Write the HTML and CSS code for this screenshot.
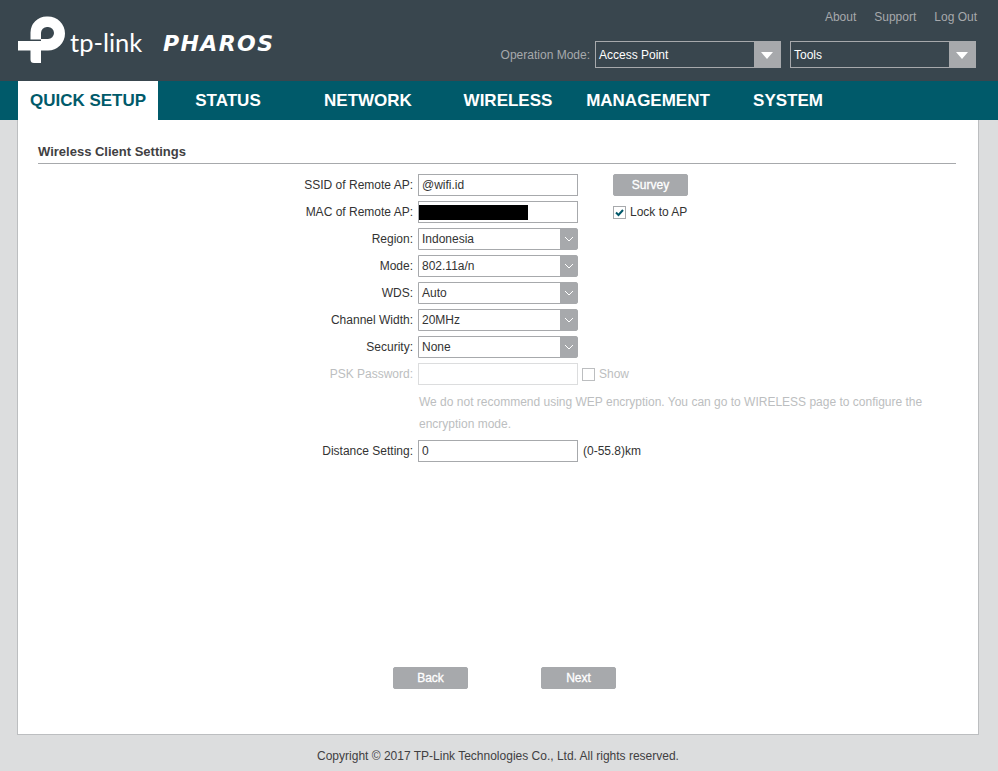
FILE: index.html
```html
<!DOCTYPE html>
<html lang="en">
<head>
	<meta charset="UTF-8">
	<meta name="viewport" content="width=device-width, initial-scale=1.0">
	<title>Quick Setup</title>
	<link rel="stylesheet" href="styles.css">
</head>
<body>
	<header class="topbar">
		<div class="brand">
			<svg class="brand-mark" width="48" height="48" viewBox="0 0 48 48">
				<path fill="#fff" d="M12.5 23.5V16.5A16 16 0 0 1 28.5 .5H30A17 17 0 0 1 30 34.5H23V23H30A6 6 0 0 0 30 11H29A6 6 0 0 0 23 17V23.5Z"/>
				<path fill="#fff" d="M0 25H23V47H16A3.5 3.5 0 0 1 12.5 43.5V34.5H0Z"/>
			</svg>
			<span class="brand-name">tp-link</span>
			<span class="brand-product">PHAROS</span>
		</div>
		<div class="topbar-right">
			<div class="toplinks">
				<a>About</a>
				<a>Support</a>
				<a>Log Out</a>
			</div>
			<div class="topselects">
				<span class="mode-label">Operation Mode:</span>
				<div class="topselect">
					<span class="topselect-text">Access Point</span>
					<span class="topselect-arrow"></span>
				</div>
				<div class="topselect">
					<span class="topselect-text">Tools</span>
					<span class="topselect-arrow"></span>
				</div>
			</div>
		</div>
	</header>

	<nav class="mainnav">
		<a class="active">QUICK SETUP</a>
		<a>STATUS</a>
		<a>NETWORK</a>
		<a>WIRELESS</a>
		<a>MANAGEMENT</a>
		<a>SYSTEM</a>
	</nav>

	<main class="panel">
		<h2 class="section-title">Wireless Client Settings</h2>

		<div class="row">
			<label class="row-label">SSID of Remote AP:</label>
			<input class="field" type="text" value="@wifi.id">
			<button class="btn btn-survey">Survey</button>
		</div>
		<div class="row">
			<label class="row-label">MAC of Remote AP:</label>
			<div class="field field-mac"><span class="redacted"></span></div>
			<span class="check check-lock">
				<span class="box">
					<svg width="11" height="11" viewBox="0 0 11 11"><path d="M2 5.5L4.5 8L9 3" fill="none" stroke="#00586a" stroke-width="2"/></svg>
				</span>
				Lock to AP
			</span>
		</div>
		<div class="row">
			<label class="row-label">Region:</label>
			<div class="combo"><span class="combo-text">Indonesia</span><span class="combo-arrow"><svg width="10" height="6" viewBox="0 0 10 6"><path d="M1 1L5 5L9 1" fill="none" stroke="#fff" stroke-width="1"/></svg></span></div>
		</div>
		<div class="row">
			<label class="row-label">Mode:</label>
			<div class="combo"><span class="combo-text">802.11a/n</span><span class="combo-arrow"><svg width="10" height="6" viewBox="0 0 10 6"><path d="M1 1L5 5L9 1" fill="none" stroke="#fff" stroke-width="1"/></svg></span></div>
		</div>
		<div class="row">
			<label class="row-label">WDS:</label>
			<div class="combo"><span class="combo-text">Auto</span><span class="combo-arrow"><svg width="10" height="6" viewBox="0 0 10 6"><path d="M1 1L5 5L9 1" fill="none" stroke="#fff" stroke-width="1"/></svg></span></div>
		</div>
		<div class="row">
			<label class="row-label">Channel Width:</label>
			<div class="combo"><span class="combo-text">20MHz</span><span class="combo-arrow"><svg width="10" height="6" viewBox="0 0 10 6"><path d="M1 1L5 5L9 1" fill="none" stroke="#fff" stroke-width="1"/></svg></span></div>
		</div>
		<div class="row">
			<label class="row-label">Security:</label>
			<div class="combo"><span class="combo-text">None</span><span class="combo-arrow"><svg width="10" height="6" viewBox="0 0 10 6"><path d="M1 1L5 5L9 1" fill="none" stroke="#fff" stroke-width="1"/></svg></span></div>
		</div>
		<div class="row disabled">
			<label class="row-label">PSK Password:</label>
			<input class="field" type="text" disabled>
			<span class="check check-show"><span class="box"></span>Show</span>
		</div>
		<p class="hint">We do not recommend using WEP encryption. You can go to WIRELESS page to configure the encryption mode.</p>
		<div class="row">
			<label class="row-label">Distance Setting:</label>
			<input class="field" type="text" value="0">
			<span class="unit">(0-55.8)km</span>
		</div>

		<div class="actions">
			<button class="btn">Back</button>
			<button class="btn">Next</button>
		</div>
	</main>

	<footer class="copyright">Copyright © 2017 TP-Link Technologies Co., Ltd. All rights reserved.</footer>
</body>
</html>
```

FILE: styles.css
```css
* {
	box-sizing: border-box;
	margin: 0;
	padding: 0;
}

body {
	font-family: "Liberation Sans", Arial, sans-serif;
	font-size: 12px;
	color: #333;
	background-color: #dcddde;
	height: 771px;
	overflow: hidden;
}

/* header */
.topbar {
	height: 81px;
	background-color: #39464e;
	display: flex;
	justify-content: space-between;
}

.brand {
	display: flex;
	align-items: flex-start;
	padding: 16px 0 0 18px;
	color: #fff;
}

.brand-mark {
	flex: none;
}

.brand-name {
	font-family: Lato, sans-serif;
	font-weight: 400;
	font-size: 25.5px;
	line-height: 30px;
	margin: 11px 0 0 4px;
	width: 93px;
}

.brand-product {
	font-family: "DejaVu Sans", sans-serif;
	font-weight: bold;
	font-style: italic;
	font-size: 22px;
	letter-spacing: 1.4px;
	line-height: 24px;
	margin-top: 16px;
}

.topbar-right {
	width: 500px;
	padding: 10px 21px 0 0;
}

.toplinks {
	display: flex;
	justify-content: flex-end;
	gap: 18px;
	height: 31px;
	line-height: 14px;
	color: #a7a9ac;
}

.topselects {
	display: flex;
	align-items: center;
	justify-content: flex-end;
	padding-right: 1px;
}

.mode-label {
	color: #a7a9ac;
	margin-right: 5px;
}

.topselect {
	width: 186px;
	height: 27px;
	border: 1px solid #a7a9ac;
	display: flex;
	color: #fff;
}

.topselect + .topselect {
	margin-left: 9px;
}

.topselect-text {
	flex: 1;
	padding-left: 3px;
	line-height: 27px;
}

.topselect-arrow {
	width: 26px;
	background-color: #a7a9ac;
	position: relative;
}

.topselect-arrow::after {
	content: "";
	position: absolute;
	left: 7px;
	top: 10px;
	border-left: 6px solid transparent;
	border-right: 6px solid transparent;
	border-top: 7px solid #fff;
}

/* main nav */
.mainnav {
	height: 39px;
	background-color: #005a6a;
	padding-left: 18px;
	display: flex;
}

.mainnav a {
	width: 140px;
	text-align: center;
	font-size: 17px;
	font-weight: bold;
	line-height: 39px;
	color: #fff;
}

.mainnav a.active {
	background-color: #fff;
	color: #005a6a;
}

/* content panel */
.panel {
	height: 615px;
	margin: 0 19px 0 17px;
	padding: 23px 22px 0 20px;
	background-color: #fff;
	border: 1px solid #bcbec0;
	border-top: none;
}

.section-title {
	font-size: 13px;
	font-weight: bold;
	line-height: 18px;
	height: 21px;
	border-bottom: 1px solid #a7a9ac;
	margin-bottom: 10px;
	color: #414042;
}

.row {
	display: flex;
	align-items: center;
	height: 27px;
	padding-bottom: 5px;
}

.row-label {
	width: 375px;
	margin-right: 5px;
	text-align: right;
}

.field {
	width: 160px;
	height: 22px;
	border: 1px solid #a7a9ac;
	padding: 0 3px;
	font-family: inherit;
	font-size: 12px;
	color: #333;
	background-color: #fff;
	outline: none;
}

.field-mac {
	display: flex;
	align-items: center;
	padding: 0;
}

.redacted {
	width: 109px;
	height: 15px;
	background-color: #000;
}

.combo {
	width: 160px;
	height: 22px;
	border: 1px solid #a7a9ac;
	border-radius: 0 2px 2px 0;
	display: flex;
}

.combo-text {
	flex: 1;
	padding-left: 3px;
	line-height: 20px;
}

.combo-arrow {
	width: 17px;
	background-color: #a7a9ac;
	display: flex;
	align-items: center;
	justify-content: center;
}

.btn {
	width: 75px;
	height: 22px;
	border: 1px solid #a7a9ac;
	border-radius: 2px;
	background-color: #a7a9ac;
	color: #fff;
	font-family: inherit;
	font-size: 12px;
	-webkit-text-stroke: .3px #fff;
}

.btn-survey {
	margin-left: 35px;
}

.check {
	display: flex;
	align-items: center;
	gap: 4px;
}

.check-lock {
	margin-left: 35px;
}

.check-show {
	margin-left: 4px;
}

.box {
	width: 13px;
	height: 13px;
	border: 1px solid #a7a9ac;
	background-color: #fff;
	display: flex;
	align-items: center;
	justify-content: center;
}

.disabled,
.disabled .row-label {
	color: #bcbec0;
}

.disabled .field {
	border-color: #dcddde;
}

.disabled .box {
	border-color: #bcbec0;
}

.unit {
	margin-left: 5px;
}

.hint {
	width: 520px;
	height: 50px;
	margin-left: 381px;
	padding-top: 1px;
	line-height: 22px;
	color: #bcbec0;
}

.actions {
	display: flex;
	gap: 73px;
	margin: 200px 0 0 355px;
}

.copyright {
	height: 36px;
	padding-right: 2px;
	line-height: 42px;
	text-align: center;
	color: #414042;
}
```
